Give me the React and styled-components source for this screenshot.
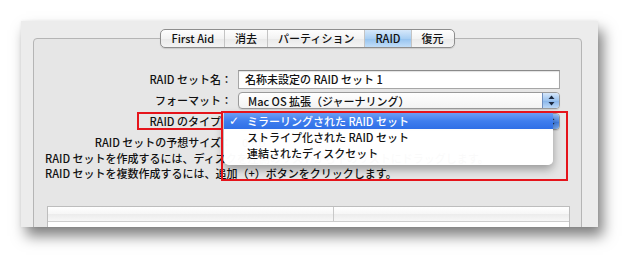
import React from 'react';
import styled, { createGlobalStyle } from 'styled-components';

const GlobalStyle = createGlobalStyle`
  html, body { margin: 0; padding: 0; background: #fff; }
  body {
    font-family: "Noto Sans CJK JP", "Liberation Sans", sans-serif;
    font-size: 11px;
    font-weight: 500;
    color: #111;
  }
  * { box-sizing: border-box; }
`;

const tabs = ['First Aid', '消去', 'パーティション', 'RAID', '復元'];
const raidTypes = ['ミラーリングされた RAID セット', 'ストライプ化された RAID セット', '連結されたディスクセット'];

function Arrows() {
  return (
    <svg width="7" height="11" viewBox="0 0 7 11">
      <path d="M3.5 0.5 L6.5 4 L0.5 4 Z" fill="#1c2a40" />
      <path d="M3.5 10.5 L6.5 7 L0.5 7 Z" fill="#1c2a40" />
    </svg>
  );
}

function App() {
  return (
    <Page>
      <GlobalStyle />
      <Window>
        <TabStrip>
          {tabs.map((t) => (
            <Tab key={t} $active={t === 'RAID'}>{t}</Tab>
          ))}
        </TabStrip>
        <Box>
          <Form>
            <Label>RAID セット名：</Label>
            <TextField>名称未設定の RAID セット 1</TextField>

            <Label>フォーマット：</Label>
            <Popup>
              Mac OS 拡張（ジャーナリング）
              <Stepper><Arrows /></Stepper>
            </Popup>

            <Label>RAID のタイプ：</Label>
            <Popup>
              {raidTypes[0]}
              <Stepper $open><Arrows /></Stepper>
              <Menu>
                {raidTypes.map((r, i) => (
                  <MenuItem key={r} $selected={i === 0}>
                    <Check>{i === 0 ? '✓' : ''}</Check>
                    {r}
                  </MenuItem>
                ))}
              </Menu>
            </Popup>

            <Label>RAID セットの予想サイズ：</Label>
            <Value>0 KB</Value>
          </Form>

          <Note>
            RAID セットを作成するには、ディスクを左側のリストから下のリストにドラッグします。<br />
            RAID セットを複数作成するには、追加（+）ボタンをクリックします。
          </Note>

          <Table>
            <TableHead>
              <HeadCell />
              <HeadCell $divider />
            </TableHead>
          </Table>

          <LabelMark />
          <MenuMark />
        </Box>
      </Window>
    </Page>
  );
}

const Page = styled.div`
  width: 640px;
  height: 268px;
  padding: 21px 0 0 21px;
  overflow: hidden;
`;

const Window = styled.div`
  width: 577px;
  height: 206px;
  padding: 8px 16px 0 12px;
  background: #ececec;
  display: flex;
  flex-direction: column;
  overflow: hidden;
  box-shadow: 5px 9px 13px rgba(0, 0, 0, 0.5), 0 0 3px rgba(0, 0, 0, 0.06);
`;

const TabStrip = styled.div`
  position: relative;
  z-index: 1;
  flex-shrink: 0;
  align-self: center;
  display: flex;
  height: 19px;
  border: 1px solid #8e8e8e;
  border-radius: 5px;
  overflow: hidden;
  background: linear-gradient(#fefefe, #f3f3f3 50%, #e9e9e9 51%, #f4f4f4);
  box-shadow: 0 1px 1px rgba(0, 0, 0, 0.12);
`;

const Tab = styled.div`
  padding: 0 10px;
  line-height: 17px;
  white-space: nowrap;
  color: #111;
  & + & { border-left: 1px solid #c4c4c4; }
  background: ${(p) => (p.$active
    ? 'linear-gradient(#d6e8fa, #a9cff3 50%, #94c2ef 51%, #c2def8)'
    : 'transparent')};
`;

const Box = styled.div`
  position: relative;
  margin-top: -10px;
  flex: 0 0 auto;
  height: 230px;
  border: 1px solid #b5b5b5;
  border-radius: 4px;
  background: #e6e6e6;
  padding: 30px 11px 0 11px;
`;

const Form = styled.div`
  display: grid;
  grid-template-columns: 187px 322px;
  grid-auto-rows: 21px;
  column-gap: 6px;
  align-items: center;
`;

const Label = styled.div`
  text-align: right;
  white-space: nowrap;
  line-height: 15px;
`;

const Value = styled.div`
  padding-left: 4px;
  line-height: 15px;
`;

const TextField = styled.div`
  height: 19px;
  border: 1px solid #a6a6a6;
  border-top-color: #8a8a8a;
  background: #fff;
  padding-left: 6px;
  line-height: 17px;
  white-space: nowrap;
  box-shadow: inset 0 1px 1px rgba(0, 0, 0, 0.12);
`;

const Popup = styled.div`
  position: relative;
  height: 17px;
  border: 1px solid #9a9a9a;
  border-radius: 4px;
  background: linear-gradient(#ffffff, #f3f3f3);
  display: flex;
  align-items: center;
  padding-left: 9px;
  white-space: nowrap;
  box-shadow: 0 1px 1px rgba(0, 0, 0, 0.1);
`;

const Stepper = styled.div`
  margin-left: auto;
  width: 17px;
  height: 100%;
  border-left: 1px solid #6f8fbf;
  border-radius: 0 3px 3px 0;
  display: flex;
  align-items: center;
  justify-content: center;
  background: ${(p) => (p.$open
    ? 'linear-gradient(#9cc2f5, #4f8ae8 50%, #3a78e2 51%, #7eb0f2)'
    : 'linear-gradient(#d6e7fa, #9cc3ee 50%, #86b4ea 51%, #bcd8f6)')};
`;

const Menu = styled.div`
  position: absolute;
  z-index: 2;
  top: -1px;
  left: -15px;
  width: 329px;
  padding-bottom: 4px;
  background: rgba(255, 255, 255, 0.98);
  border-radius: 0 0 5px 5px;
  box-shadow: 0 4px 10px rgba(0, 0, 0, 0.35);
`;

const MenuItem = styled.div`
  display: flex;
  align-items: center;
  height: 16px;
  line-height: 16px;
  white-space: nowrap;
  color: ${(p) => (p.$selected ? '#fff' : '#111')};
  background: ${(p) => (p.$selected
    ? 'linear-gradient(#6c9ef4, #3f7eee 50%, #2f6fe6)'
    : 'transparent')};
`;

const Check = styled.span`
  width: 23px;
  padding-left: 5px;
  font-family: "DejaVu Sans", sans-serif;
  font-size: 12px;
  font-weight: bold;
`;

const Note = styled.div`
  margin-top: -2px;
  line-height: 15px;
  white-space: nowrap;
`;

const Table = styled.div`
  margin: 25px 0 0 2px;
  width: 523px;
  height: 60px;
  border: 1px solid #bdbdbd;
  background: #fff;
`;

const TableHead = styled.div`
  display: grid;
  grid-template-columns: 285px 1fr;
  height: 15px;
  border-bottom: 1px solid #cdcdcd;
  background: linear-gradient(#ffffff, #f6f6f6 50%, #ececec 51%, #f7f7f7);
`;

const HeadCell = styled.div`
  border-left: ${(p) => (p.$divider ? '1px solid #c8c8c8' : 'none')};
`;

const Mark = styled.div`
  position: absolute;
  z-index: 3;
  border: 2px solid #e5141b;
  pointer-events: none;
`;

const LabelMark = styled(Mark)`
  left: 103px;
  top: 73px;
  width: 86px;
  height: 18px;
`;

const MenuMark = styled(Mark)`
  left: 187px;
  top: 72px;
  width: 347px;
  height: 70px;
`;

export default App;
